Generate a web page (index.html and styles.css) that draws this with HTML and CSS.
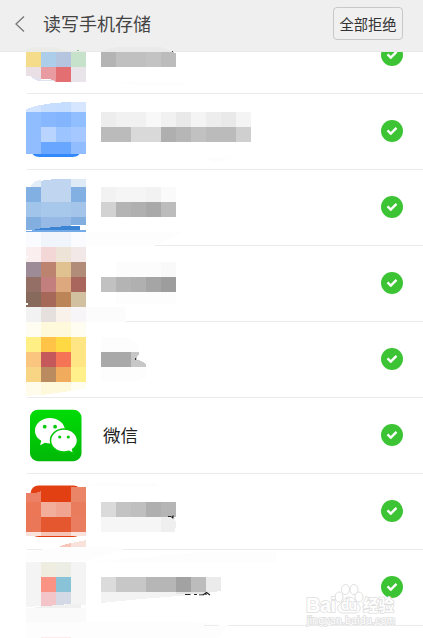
FILE: index.html
```html
<!DOCTYPE html>
<html lang="zh-CN">
<head>
  <meta charset="UTF-8">
  <meta name="viewport" content="width=device-width, initial-scale=1.0">
  <title>读写手机存储</title>
  <link rel="stylesheet" href="styles.css">
</head>
<body>
  <header class="header">
    <svg class="back" viewBox="0 0 12 18"><path d="M10 1.5L2 9l8 7.5"/></svg>
    <h1>读写手机存储</h1>
    <button class="deny-all">全部拒绝</button>
    <svg class="header-edge" viewBox="0 44 200 8">
      <path fill="#ebece7" d="M26 52v-3l6-2h23l10 3 6 2z"/>
      <path fill="#eaeaea" d="M101 52v-1l7-2 8-2h45l8 3 5 2z"/>
      <path fill="#8dc891" d="M77 50h2v1h-2z"/>
      <path fill="#444" d="M172 51h1v1h-1z"/>
    </svg>
  </header>

  <main class="list">
    <div class="app">
      <svg class="art" viewBox="26 18 250 75">
        <path fill="#f4dc8a" d="M26 52h15v15H26z"/><path fill="#adceeb" d="M41 52h15v15H41z"/><path fill="#b5c5e0" d="M56 52h15v15H56z"/><path fill="#c6e2ca" d="M71 52h15v15H71z"/>
        <path fill="#eadfe4" d="M26 67h15v13l-3-.5-5-2-2-1-5-.7z"/><path fill="#dfe3ef" d="M32 77l6 1 3 2h13v1H38l-6-3z"/><path fill="#e89ca1" d="M41 67h15v15h-1v-1l-6-2h-8z"/><path fill="#e46f72" d="M56 67h15v15H56z"/><path fill="#e9e4e9" d="M71 67h15v15H71z"/>
        <path fill="#b4b4b4" d="M101 52h15v15h-15z"/><path fill="#c0c0c0" d="M116 52h30v15h-30z"/><path fill="#c3c3c3" d="M146 52h15v15h-15z"/><path fill="#bcbcbc" d="M161 52h13v1h2v14h-15z"/>
        <path fill="#fdfdfd" d="M120 82h67l-5 4h-44z"/>
      </svg>
      <svg class="check"><use href="#check"/></svg>
    </div>

    <div class="app">
      <svg class="art" viewBox="26 94 250 75">
        <path class="smooth" fill="#3389fa" d="M32 153h48c-1 2.500-4 4-8 4H40c-4 0-7-1.500-8-4z"/>
        <path fill="#d2e4ff" d="M26 112v-3l3-1 6-2 6-1v7z"/><path fill="#c8deff" d="M41 112v-7l5-1 8-1h2v9z"/><path fill="#c5ddff" d="M56 112v-9l9-1h6v10z"/><path fill="#d6e6ff" d="M71 102h15v10H71z"/>
        <path fill="#90bdfe" d="M26 112h15v15H26zM26 127h15v15H26z"/><path fill="#87b7fe" d="M41 112h15v15H41z"/><path fill="#83b5fe" d="M56 112h15v15H56z"/><path fill="#90befe" d="M71 112h15v15H71z"/>
        <path fill="#b9d5ff" d="M41 127h15v15H41z"/><path fill="#9cc4ff" d="M56 127h15v15H56z"/><path fill="#a4c8ff" d="M71 127h15v15H71z"/>
        <path fill="#91bdff" d="M26 142h15v12H26zM71 142h15v12H71z"/><path fill="#68a6ff" d="M41 142h30v12H41z"/>
        <path fill="#ededed" d="M101 112h15v15h-15zM206 112h15v15h-15z"/><path fill="#f1f1f1" d="M116 112h30v15h-30zM161 112h15v15h-15z"/><path fill="#f8f8f8" d="M146 112h15v15h-15z"/><path fill="#e9e9e9" d="M176 112h15v15h-15zM221 112h15v15h-15z"/><path fill="#f4f4f4" d="M191 112h15v15h-15zM236 112h15v15h-15z"/>
        <path fill="#bbb" d="M101 127h30v15h-30zM206 127h30v15h-30z"/><path fill="#d9d9d9" d="M131 127h30v15h-30z"/><path fill="#afafaf" d="M161 127h15v15h-15z"/><path fill="#b6b6b6" d="M176 127h15v15h-15z"/><path fill="#c1c1c1" d="M191 127h15v15h-15z"/><path fill="#cfcfcf" d="M236 127h15v15h-15z"/>
        <path fill="#fdfdfd" d="M203 157h33l-12 4-10 1z"/>
      </svg>
      <svg class="check"><use href="#check"/></svg>
    </div>

    <div class="app">
      <svg class="art" viewBox="26 170 250 75">
        <path fill="#e3edf8" d="M31 187l1-3 3-3 6-1v7z"/><path fill="#c0d5ef" d="M41 181l4-1 12-1h14v23H41z"/><path fill="#deebf7" d="M71 179h15v8H71z"/>
        <path fill="#82b0e2" d="M26 187h15v15H26zM71 187h15v15H71z"/><path fill="#a0c4ea" d="M26 202h15v15H26z"/><path fill="#a7c8eb" d="M41 202h30v15H41z"/><path fill="#a4c4ea" d="M71 202h15v15H71z"/>
        <path fill="#82aee0" d="M26 217h15v13H26zM71 217h15v8H71z"/><path fill="#96bae5" d="M41 217h30v13H41z"/>
        <path fill="#3b84d3" d="M32 230l10-2 15-1 8-1h15v4z"/><path fill="#74aae5" d="M26 230h60v2H26z"/>
        <path fill="#fff" d="M82 225h4v5h-6zM26 230h7l-2 1h-5z"/>
        <path fill="#fafbfe" d="M26 232h15v15H26zM71 232h15v15H71z"/><path fill="#f0f5fc" d="M41 232h30v15H41z"/>
        <path fill="#f2f2f2" d="M101 187h15v15h-15zM146 187h15v15h-15z"/><path fill="#f5f5f5" d="M116 187h30v15h-30z"/><path fill="#fafafa" d="M161 187h15v15h-15z"/>
        <path fill="#d2d2d2" d="M101 202h15v15h-15z"/><path fill="#b4b4b4" d="M116 202h15v15h-15z"/><path fill="#b0b0b0" d="M131 202h15v15h-15z"/><path fill="#a9a9a9" d="M146 202h15v15h-15z"/><path fill="#bcbcbc" d="M161 202h15v15h-15z"/>
        <path fill="#fdfdfd" d="M86 232h97l-29 14H86z"/>
      </svg>
      <svg class="check"><use href="#check"/></svg>
    </div>

    <div class="app">
      <svg class="art" viewBox="26 246 250 75">
        <path fill="#faefee" d="M26 247h15v15H26z"/><path fill="#f2d7d6" d="M41 247h15v15H41z"/><path fill="#eee3d7" d="M56 247h15v15H56z"/><path fill="#f1e8e7" d="M71 247h15v15H71z"/>
        <path fill="#9e8b98" d="M26 262h15v15H26z"/><path fill="#bc836e" d="M41 262h15v15H41z"/><path fill="#e0c291" d="M56 262h15v15H56z"/><path fill="#b18d79" d="M71 262h15v15H71z"/>
        <path fill="#946f66" d="M26 277h15v15H26z"/><path fill="#c37e7e" d="M41 277h15v15H41z"/><path fill="#dea87f" d="M56 277h15v15H56z"/><path fill="#a9665d" d="M71 277h15v15H71z"/>
        <path fill="#876a5c" d="M26 292h15v15H26z"/><path fill="#a66859" d="M41 292h15v15H41z"/><path fill="#bb8557" d="M56 292h15v15H56z"/><path fill="#d2c1a0" d="M71 292h15v15H71z"/>
        <path fill="#f2f2f2" d="M26 307h15v15H26z"/><path fill="#e5e0de" d="M41 307h15v15H41z"/><path fill="#f8f2eb" d="M56 307h15v15H56z"/><path fill="#f7f5f7" d="M71 307h15v15H71z"/>
        <path fill="#fff" d="M26 256h2l-1 2h-1zM26 303h2v1l-1 1h-1z"/>
        <path fill="#fcfcfc" d="M116 262h45v15h-45zM86 307h39l1 15H86z"/><path fill="#f9f9f9" d="M161 262h15v15h-15z"/>
        <path fill="#c1c1c1" d="M101 277h15v15h-15z"/><path fill="#b4b4b4" d="M116 277h15v15h-15z"/><path fill="#b0b0b0" d="M131 277h15v15h-15z"/><path fill="#a5a5a5" d="M146 277h15v15h-15z"/><path fill="#9d9d9d" d="M161 277h15v15h-15z"/><path fill="#fdfdfd" d="M116 292h60v12h-60z"/>
      </svg>
      <svg class="check"><use href="#check"/></svg>
    </div>

    <div class="app">
      <svg class="art" viewBox="26 322 250 75">
        <path fill="#fffdf1" d="M26 322h15v15H26zM71 322h15v15H71z"/><path fill="#fff9dc" d="M41 322h30v15H41z"/>
        <path fill="#ffef84" d="M26 337h15v15H26z"/><path fill="#ffc348" d="M41 337h15v15H41z"/><path fill="#ffd944" d="M56 337h15v15H56z"/><path fill="#ffe583" d="M71 337h15v30H71z"/>
        <path fill="#f9c57f" d="M26 352h15v15H26z"/><path fill="#c4585a" d="M41 352h15v15H41z"/><path fill="#f47455" d="M56 352h15v15H56z"/>
        <path fill="#f8d485" d="M26 367h15v15H26z"/><path fill="#ba8b5f" d="M41 367h15v15H41z"/><path fill="#f0ab5c" d="M56 367h15v15H56z"/><path fill="#fff08b" d="M71 367h15v15H71z"/>
        <path fill="#fffcec" d="M26 382h15v13l-15 1z"/><path fill="#fff9dc" d="M41 382h30v9l-30 4z"/><path fill="#fffdf0" d="M71 382h15v6l-15 3z"/>
        <path fill="#fdfdfd" d="M101 337h25l10 5 3 10h-38zM101 367h45v11l-8 3h-37z"/>
        <path fill="#a9a9a9" d="M101 352h30v15h-30z"/><path fill="#c7c7c7" d="M131 352h8v2l-2 2v4h2l4 2 3 3v2h-15z"/><path fill="#333" d="M135 358h1v2h-1z"/>
      </svg>
      <svg class="check"><use href="#check"/></svg>
    </div>

    <div class="app">
      <svg class="icon" viewBox="30 409 52 53">
        <defs><linearGradient id="wechat" x2="0" y2="1"><stop stop-color="#00dc05"/><stop offset="1" stop-color="#02b808"/></linearGradient></defs>
        <rect x="30" y="409.7" width="51.5" height="51.5" rx="8" fill="url(#wechat)"/>
        <path fill="#fff" d="M50 418c8.300 0 15 5.600 15 12.700S58.300 443.400 50 443.400c-1.800 0-3.300-.2-5-.7l-5 2.500 1.300-4.500c-4-2.300-6.300-5.900-6.300-10C35 423.600 41.700 418 50 418z"/>
        <path fill="#fff" stroke="#05c908" stroke-width="1.500" d="M64 429c7.500 0 13.500 5.100 13.500 11.500 0 3.600-2 6.800-4.900 8.900l1 4.300-4.600-2.500c-1.600.6-3.300.8-5 .8-7.500 0-13.500-5.100-13.500-11.500S56.500 429 64 429z"/>
        <g fill="#08c80b"><circle cx="44.700" cy="426.700" r="1.900"/><circle cx="55.100" cy="426.700" r="1.900"/><circle cx="59.700" cy="437" r="1.600"/><circle cx="68.300" cy="437" r="1.600"/></g>
      </svg>
      <span class="name">微信</span>
      <svg class="check"><use href="#check"/></svg>
    </div>

    <div class="app">
      <svg class="art" viewBox="26 474 250 75">
        <rect class="smooth" x="30.500" y="485.500" width="51" height="51.500" rx="8" fill="#e24013"/>
        <path fill="#eb8067" d="M26 493h10l5-2v11H26z"/><path fill="#eb8568" d="M71 487h15v15H71z"/>
        <path fill="#eb7757" d="M26 502h15v15H26z"/><path fill="#f2ad9b" d="M41 502h15v15H41z"/><path fill="#f1a591" d="M56 502h15v15H56z"/><path fill="#ea7c5e" d="M71 502h15v15H71z"/>
        <path fill="#ea7858" d="M26 517h15v15H26z"/><path fill="#e5572f" d="M41 517h30v15H41z"/><path fill="#ea7d60" d="M71 517h15v15H71z"/>
        <path fill="#fae2dc" d="M26 532h15v4H26zM71 532h15v4H71z"/><path fill="#f6c4b7" d="M41 532h30v4H41z"/>
        <path fill="#fdfdfd" d="M82 486l18-3h54l8 4z"/>
        <path fill="#f7c5ba" d="M60 546l11-3v4H60z"/><path fill="#f9e2dc" d="M71 543l15-3v7H71z"/>
        <path fill="#dadada" d="M101 502h15v15h-15z"/><path fill="#c3c3c3" d="M116 502h15v15h-15z"/><path fill="#bfbfbf" d="M131 502h15v15h-15z"/><path fill="#afafaf" d="M146 502h15v15h-15z"/><path fill="#b5b5b5" d="M161 502h15v15h-15z"/>
        <path fill="#f6f6f6" d="M101 517h60v15h-60z"/><path fill="#efefef" d="M161 517h14l1 8-1 7h-14z"/><path class="smooth" fill="#222" d="M168 516h3v1h-3zM171 517l2.500-2v3.500h-1z"/>
        <path fill="#fdfdfd" d="M44 549l15-2h52l14 2-39 12H26v-8z"/>
      </svg>
      <svg class="check"><use href="#check"/></svg>
    </div>

    <div class="app">
      <svg class="art" viewBox="26 550 250 75">
        <path fill="#fdfdfd" d="M26 622h165l37 3v1l-10 12H26zM90 562l110-10h76v10z"/>
        <path fill="#f4f4f4" d="M26 562h15v44l-15 1zM71 562h15v43H71z"/><path fill="#efece0" d="M41 562h15v15H41z"/><path fill="#ecede5" d="M56 562h15v15H56z"/>
        <path fill="#fb9385" d="M41 577h15v15H41z"/><path fill="#89c3d8" d="M56 577h15v15H56z"/><path fill="#f3c5c9" d="M41 592h15v13l-15 2z"/><path fill="#d4dae5" d="M56 592h15v12l-15 1z"/>
        <path fill="#f0f0f0" d="M34 607l24-2 13-1h10v4H35z"/><path fill="#fafafa" d="M26 608h60v14H26z"/>
        <path fill="#dbdbdb" d="M101 577h15v15h-15z"/><path fill="#c7c7c7" d="M116 577h30v15h-30z"/><path fill="#b6b6b6" d="M146 577h30v15h-30z"/><path fill="#a2a2a2" d="M176 577h15v15h-15z"/><path fill="#bcbcbc" d="M191 577h15v15h-15z"/><path fill="#ebebeb" d="M206 577h15v14l-15 2z"/>
        <path fill="#f3f3f3" d="M101 592h90v3l-50 4-40 4z"/><path fill="#e5e5e5" d="M176 592h30v2h-30z"/>
        <path class="smooth" fill="none" stroke="#222" stroke-width="1.200" d="M185 594.500h5.500m3.500 0h3m3-.5v1.500m2-1.500v1.500m1-.5l3.500-2.500 3.500 2.500m-4-1.500v1.500"/>
        <path fill="#fdfdfd" d="M190 625h38v1h-38z"/><path fill="#ececec" d="M204 625h14v1h-14z"/><path fill="#fee9e8" d="M41 637h30v1H41z"/>
      </svg>
      <svg class="check"><use href="#check"/></svg>
    </div>
  </main>

  <svg class="watermark" viewBox="300 578 104 52">
    <g class="paw"><ellipse cx="339" cy="597" rx="4" ry="5"/><ellipse cx="345.500" cy="589.500" rx="4" ry="5"/><ellipse cx="354" cy="589.500" rx="4" ry="5"/><ellipse cx="359" cy="597" rx="4" ry="5"/><path d="M349 597c5 0 7 5 10 8 3 4 0 8-4 8h-12c-5 0-7-5-4-8 4-3 5-8 10-8z"/></g>
    <g class="mark-text">
      <text x="306" y="612" textLength="30">Bai</text>
      <text class="du" x="341" y="610" textLength="16">du</text>
      <text class="cn" x="363" y="611" textLength="31">经验</text>
      <text class="url" x="307" y="624" textLength="88">jingyan.baidu.com</text>
    </g>
  </svg>

  <!-- Shared icons -->
  <svg width="0" height="0" class="sprite">
    <symbol id="check" viewBox="0 0 22 22">
      <circle cx="11" cy="11" r="11" fill="#3dc435"/>
      <path fill="none" stroke="#fff" stroke-width="2.400" d="M6.500 10.300l3.300 3.200 5.700-5.700"/>
    </symbol>
  </svg>
</body>
</html>
```

FILE: styles.css
```css
body {
  margin: 0;
  height: 638px;
  overflow: hidden;
  background: #fff;
  font-family: "Noto Sans CJK SC", sans-serif;
}

.header {
  position: relative;
  display: flex;
  align-items: center;
  box-sizing: border-box;
  height: 52px;
  padding: 0 20px 4px 14px;
  background: #efefef;
  border-bottom: 1px solid #e9e9e9;
}

.header h1 {
  flex: 1;
  margin: 0 0 1px 17px;
  font-size: 18px;
  font-weight: 400;
  line-height: 26px;
  color: #444;
}

.back {
  width: 12px;
  height: 18px;
  fill: none;
  stroke: #777;
  stroke-width: 1.3;
}

.deny-all {
  width: 70px;
  height: 33px;
  padding: 0;
  border: 1px solid #c8c8c8;
  border-radius: 4px;
  background: #f0f0f0;
  font: 14.3px "Noto Sans CJK SC", sans-serif;
  color: #333;
}

.header-edge {
  position: absolute;
  left: 0;
  bottom: -1px;
  width: 200px;
  height: 8px;
}

.list {
  display: flex;
  flex-direction: column;
  justify-content: flex-end;
  height: 574px;
  overflow: hidden;
  padding-bottom: 12px;
}

.app {
  display: flex;
  flex: none;
  align-items: center;
  height: 75px;
  margin-left: 27px;
  padding-right: 20px;
  border-bottom: 1px solid #ececec;
}

.art {
  width: 250px;
  height: 75px;
  margin-left: -1px;
  overflow: visible;
  shape-rendering: crispEdges;
}

.smooth {
  shape-rendering: geometricPrecision;
}

.icon {
  width: 52px;
  height: 53px;
  margin: 0 21px 0 3px;
}

.name {
  margin-bottom: 2px;
  font-size: 17.5px;
  line-height: 26px;
  color: #222;
}

.check {
  width: 22px;
  height: 22px;
  margin: 0 0 1px auto;
}

.sprite {
  position: absolute;
}

.watermark {
  position: absolute;
  left: 300px;
  top: 578px;
  width: 104px;
  height: 52px;
}

.paw {
  fill: #fff;
  stroke: #e0e0e0;
  stroke-width: 1;
}

.mark-text {
  font: bold 20px "Liberation Sans", sans-serif;
  fill: #fff;
  stroke: #dedede;
  stroke-width: 1.6;
  paint-order: stroke;
}

.mark-text .du {
  font-size: 14px;
}

.mark-text .cn {
  font: bold 15.5px "Noto Sans CJK SC", sans-serif;
}

.mark-text .url {
  font-size: 10px;
  font-weight: 400;
}
```
